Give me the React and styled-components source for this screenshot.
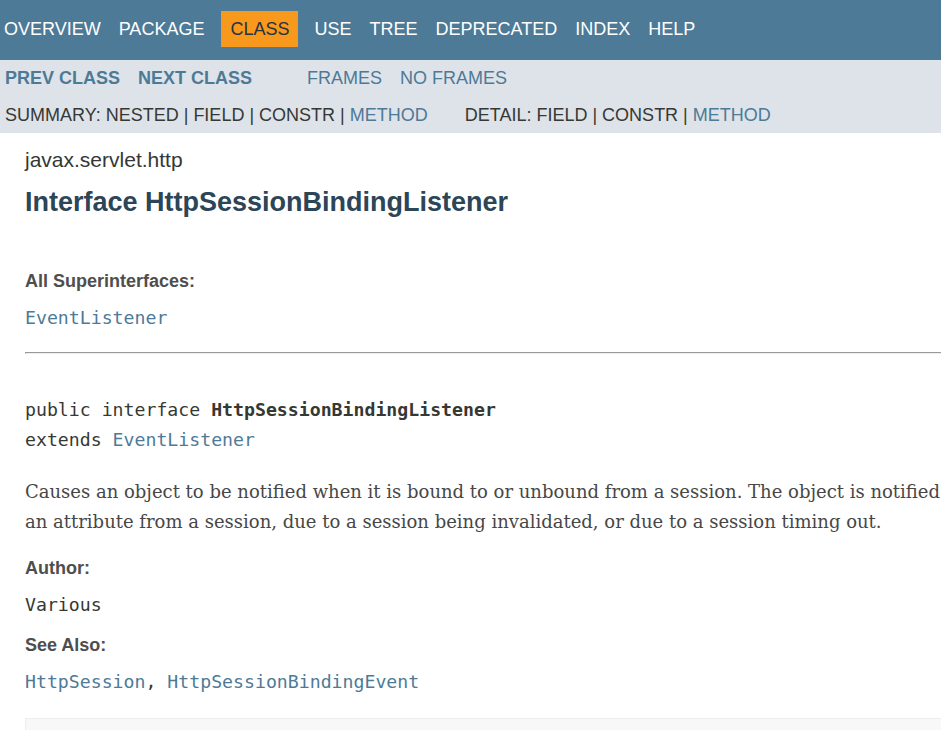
import React from "react";
import styled, { createGlobalStyle } from "styled-components";

const GlobalStyle = createGlobalStyle`
  html, body {
    margin: 0;
    padding: 0;
    overflow: hidden;
    background: #ffffff;
  }
  body {
    font-family: "Liberation Sans", Arial, sans-serif;
    color: #353833;
  }
`;

const Page = styled.div`
  width: 1900px;
`;

const TopNav = styled.div`
  background-color: #4d7a97;
  height: 60px;
  box-sizing: border-box;
  padding-top: 11px;
  display: flex;
  align-items: flex-start;
`;

const NavList = styled.ul`
  list-style: none;
  margin: 0 0 0 -5px;
  padding: 0;
  display: flex;
`;

const NavItem = styled.li`
  padding: 8px 9px;
  line-height: 20px;
  font-size: 18px;
  text-transform: uppercase;
  color: ${(p) => (p.$active ? "#253441" : "#ffffff")};
  background-color: ${(p) => (p.$active ? "#f8981d" : "transparent")};
  margin: ${(p) => (p.$active ? "0 7px 0 8px" : "0")};
`;

const SubNav = styled.div`
  background-color: #dee3e9;
  padding: 8px 0 7px 5px;
  display: flex;
  flex-direction: column;
  gap: 16px;
`;

const SubRow = styled.div`
  display: flex;
  gap: ${(p) => p.$gap}px;
  font-size: 18px;
  line-height: 21px;
  white-space: nowrap;
`;

const LinkGroup = styled.div`
  display: flex;
  gap: ${(p) => p.$gap || 0}px;
`;

const SubLink = styled.span`
  color: #4d7a97;
  font-weight: ${(p) => (p.$bold ? "bold" : "normal")};
`;

const Content = styled.div`
  padding-left: 25px;
`;

const SubTitle = styled.div`
  font-size: 21px;
  line-height: 24px;
  margin-top: 15px;
  color: #353833;
`;

const Title = styled.h2`
  font-size: 27px;
  line-height: 31px;
  font-weight: bold;
  color: #2c4557;
  margin: 15px 0 0;
`;

const DefList = styled.dl`
  margin: ${(p) => p.$top}px 0 0;
`;

const Term = styled.dt`
  font-size: 18px;
  line-height: 21px;
  font-weight: bold;
  color: #4e4e4e;
  margin-top: ${(p) => p.$top || 0}px;
`;

const Def = styled.dd`
  margin: ${(p) => p.$top}px 0 0;
  font-family: "DejaVu Sans Mono", "Liberation Mono", monospace;
  font-size: 18.2px;
  line-height: 21px;
  color: #353833;
`;

const CodeLink = styled.span`
  color: #4d7a97;
`;

const Rule = styled.hr`
  margin: 24px 0 0;
  border: none;
  border-top: 1px solid #999999;
  border-bottom: 1px solid #eeeeee;
  border-left: 1px solid #999999;
  height: 0;
`;

const Signature = styled.pre`
  margin: 41px 0 0;
  font-family: "DejaVu Sans Mono", "Liberation Mono", monospace;
  font-size: 18.2px;
  line-height: 30px;
  color: #353833;
`;

const TypeName = styled.span`
  font-weight: bold;
  color: #353833;
`;

const Block = styled.div`
  margin-top: 22px;
  font-family: "DejaVu Serif", Georgia, "Liberation Serif", serif;
  font-size: 18px;
  line-height: 30px;
  color: #474747;
  white-space: nowrap;
`;

const Summary = styled.div`
  margin-top: 26px;
  height: 120px;
  background-color: #f8f8f8;
  border: 1px solid #ededed;
`;

const navItems = ["Overview", "Package", "Class", "Use", "Tree", "Deprecated", "Index", "Help"];

function App() {
  return (
    <Page>
      <GlobalStyle />
      <TopNav>
        <NavList>
          {navItems.map((item) => (
            <NavItem key={item} $active={item === "Class"}>
              {item}
            </NavItem>
          ))}
        </NavList>
      </TopNav>
      <SubNav>
        <SubRow $gap={55}>
          <LinkGroup $gap={18}>
            <SubLink $bold>PREV CLASS</SubLink>
            <SubLink $bold>NEXT CLASS</SubLink>
          </LinkGroup>
          <LinkGroup $gap={18}>
            <SubLink>FRAMES</SubLink>
            <SubLink>NO FRAMES</SubLink>
          </LinkGroup>
        </SubRow>
        <SubRow $gap={37}>
          <span>
            SUMMARY:&nbsp;NESTED&nbsp;|&nbsp;FIELD&nbsp;|&nbsp;CONSTR&nbsp;|&nbsp;<SubLink>METHOD</SubLink>
          </span>
          <span>
            DETAIL:&nbsp;FIELD&nbsp;|&nbsp;CONSTR&nbsp;|&nbsp;<SubLink>METHOD</SubLink>
          </span>
        </SubRow>
      </SubNav>
      <Content>
        <SubTitle>javax.servlet.http</SubTitle>
        <Title>Interface HttpSessionBindingListener</Title>
        <DefList $top={53}>
          <Term>All Superinterfaces:</Term>
          <Def $top={15}>
            <CodeLink>EventListener</CodeLink>
          </Def>
        </DefList>
        <Rule />
        <Signature>
          public interface <TypeName>HttpSessionBindingListener</TypeName>
          {"\n"}extends <CodeLink>EventListener</CodeLink>
        </Signature>
        <Block>
          Causes an object to be notified when it is bound to or unbound from a session. The object is notified by an
          HttpSessionBindingEvent object. This may be as a result of a servlet programmer explicitly unbinding
          <br />
          an attribute from a session, due to a session being invalidated, or due to a session timing out.
        </Block>
        <DefList $top={21}>
          <Term>Author:</Term>
          <Def $top={15}>Various</Def>
          <Term $top={20}>See Also:</Term>
          <Def $top={15}>
            <CodeLink>HttpSession</CodeLink>, <CodeLink>HttpSessionBindingEvent</CodeLink>
          </Def>
        </DefList>
        <Summary />
      </Content>
    </Page>
  );
}

export default App;
